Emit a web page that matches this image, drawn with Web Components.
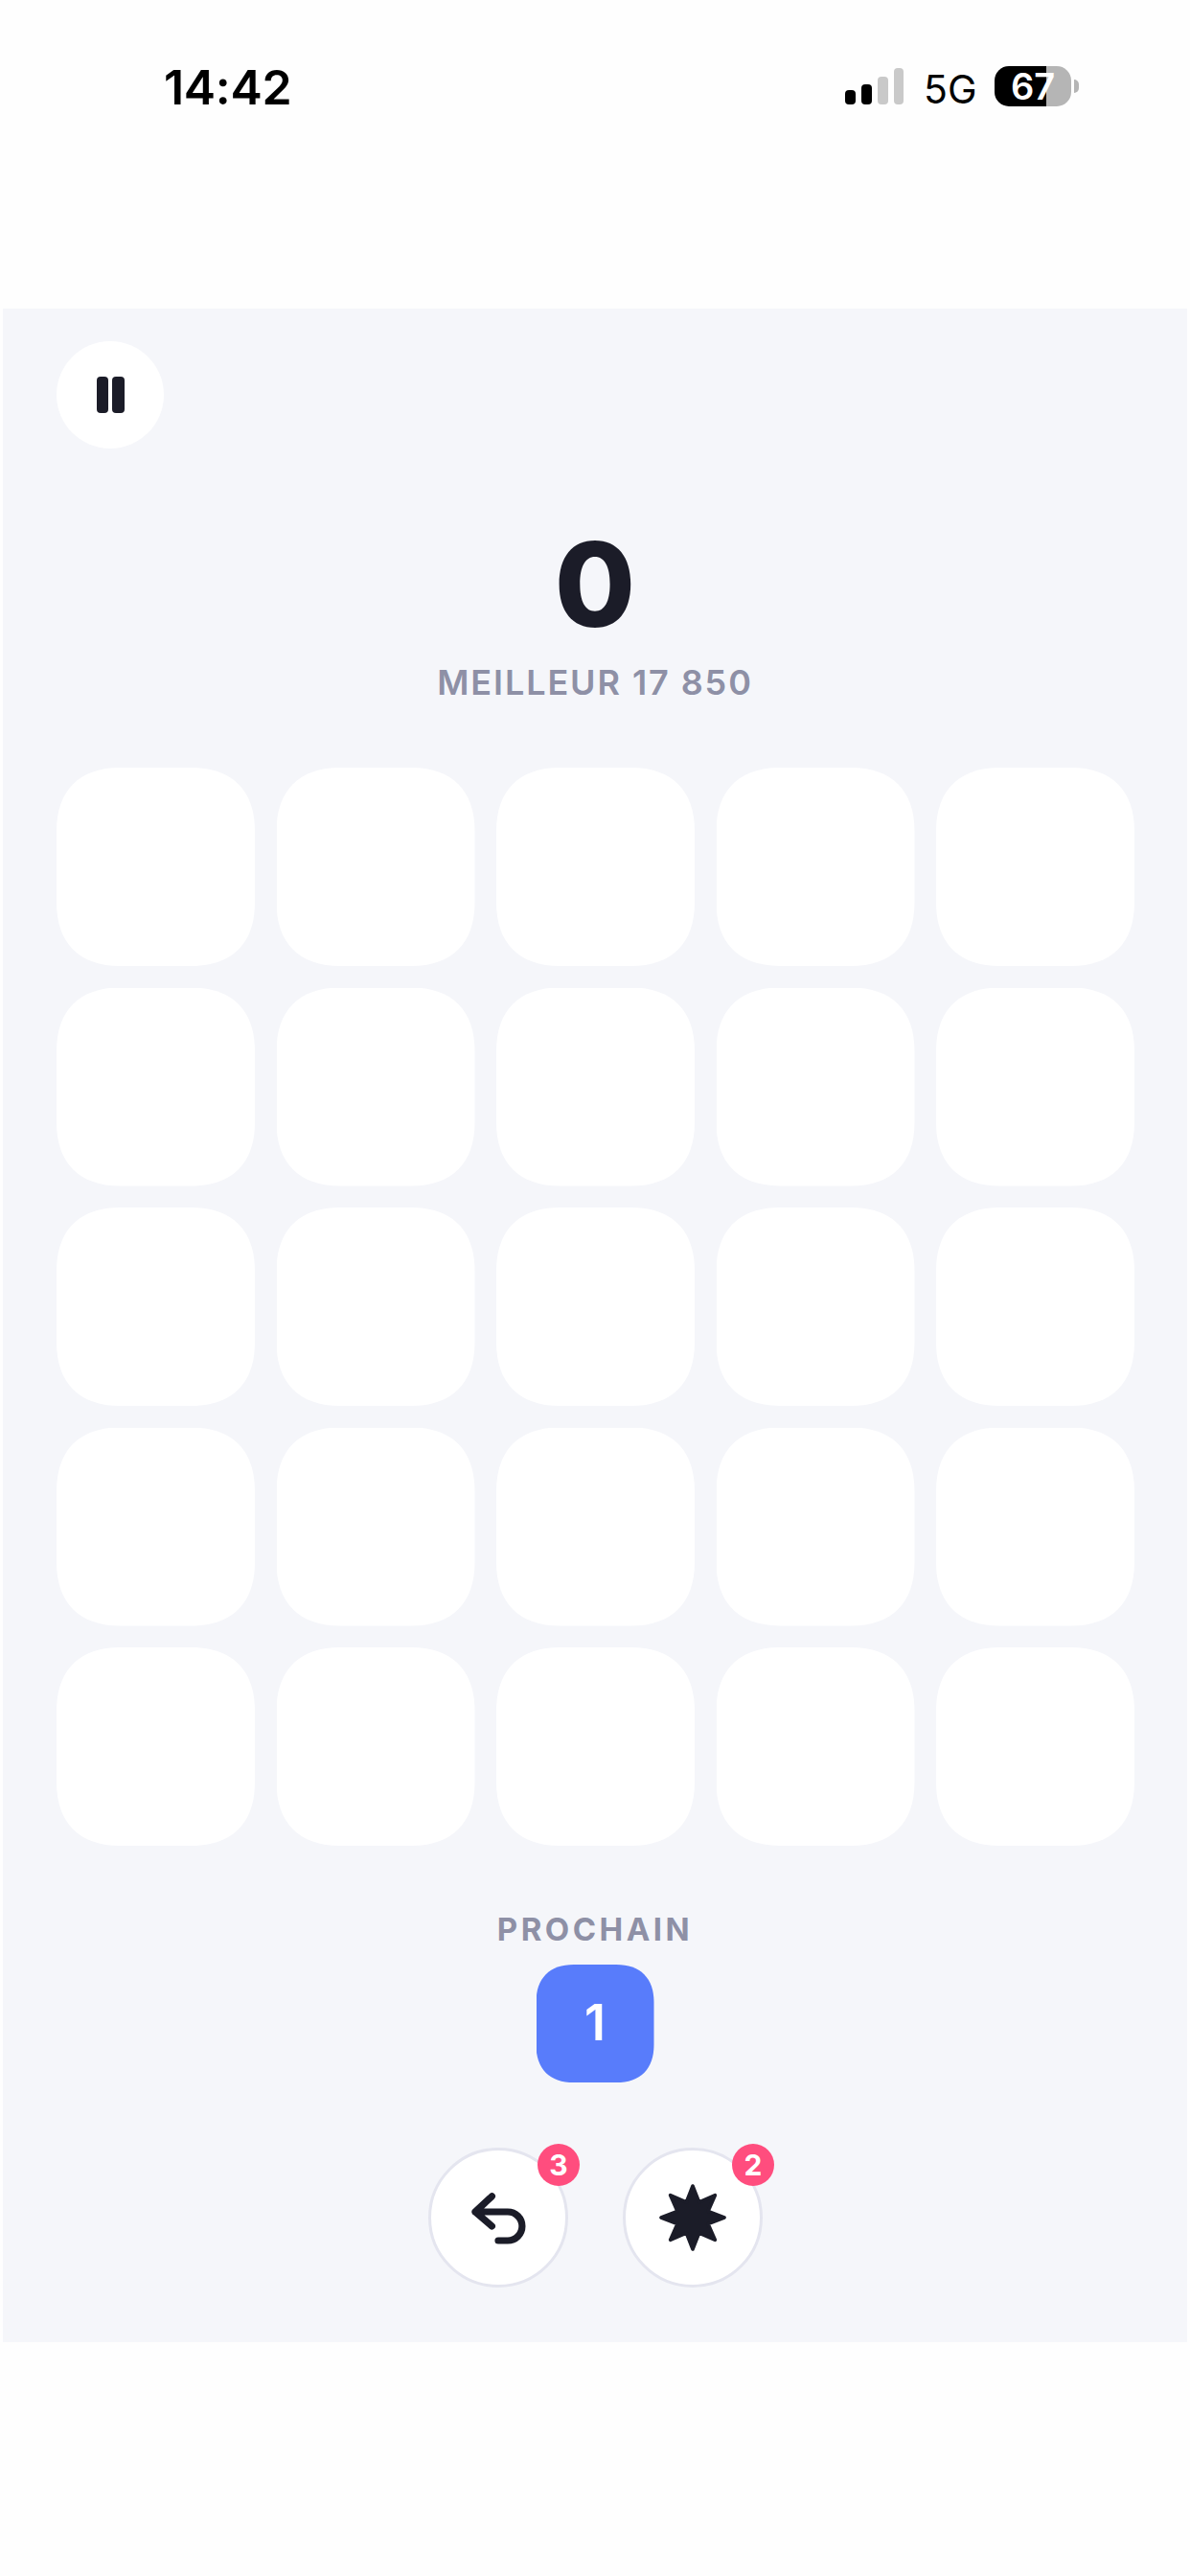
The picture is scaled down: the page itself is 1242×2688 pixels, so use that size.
<!DOCTYPE html>
<html lang="fr">
<head>
<meta charset="utf-8">
<title>Jeu</title>
<style>
html,body{margin:0;padding:0;background:#fefefe;font-family:Inter,"Noto Sans",sans-serif;}
</style>
</head>
<body>
<game-app></game-app>
<script>
function squircle(s,c,k){
  const a=s*c, b=s-a, h=s*k;
  return `M${a} 0H${b}C${s-h} 0 ${s} ${h} ${s} ${a}V${b}C${s} ${s-h} ${s-h} ${s} ${b} ${s}H${a}C${h} ${s} 0 ${s-h} 0 ${b}V${a}C0 ${h} ${h} 0 ${a} 0Z`;
}

class StatusBar extends HTMLElement{
  constructor(){super();this.attachShadow({mode:'open'}).innerHTML=`
  <style>
  :host{display:flex;justify-content:space-between;align-items:flex-start;height:322px;box-sizing:border-box;padding:0 116px 0 171px;background:#fefefe;color:#000;}
  .time{font:600 50px/50px Inter,sans-serif;margin-top:66px;letter-spacing:-.3px;}
  .right{display:flex;align-items:flex-start;margin-top:69px;}
  .sig{display:flex;align-items:flex-end;gap:6px;height:40px;margin-top:0;}
  .sig i{display:block;width:11px;border-radius:4px;background:#000;}
  .sig i.off{background:#c9c9c9;width:10.5px;}
  .net{font:400 41px/42px Inter,sans-serif;margin:3px 0 0 21px;width:74px;}
  .bat{display:flex;align-items:center;justify-content:center;width:80px;height:42px;border-radius:15px;background:linear-gradient(90deg,#000 0 54px,#b5b5b5 54px);color:#fff;font:600 38px/42px Inter,sans-serif;}
  .nub{width:5px;height:14px;margin:14px 0 0 3px;background:#b5b5b5;border-radius:0 7px 7px 0;}
  </style>
  <div class="time">14:42</div>
  <div class="right">
    <div class="sig"><i style="height:15px"></i><i style="height:21px"></i><i class="off" style="height:29px"></i><i class="off" style="height:38px"></i></div>
    <div class="net">5G</div>
    <div class="bat">67</div>
    <div class="nub"></div>
  </div>`;}
}
customElements.define('status-bar',StatusBar);

class PauseButton extends HTMLElement{
  constructor(){super();this.attachShadow({mode:'open'}).innerHTML=`
  <style>
  :host{display:flex;align-items:center;justify-content:center;gap:4px;width:112px;height:112px;border-radius:50%;background:#fff;}
  i{display:block;width:12.5px;height:38px;border-radius:4px;background:#1b1c28;}
  </style><i></i><i></i>`;}
}
customElements.define('pause-button',PauseButton);

class ScoreBoard extends HTMLElement{
  constructor(){super();this.attachShadow({mode:'open'}).innerHTML=`
  <style>
  :host{display:flex;flex-direction:column;align-items:center;}
  .score{font:800 122px/120px Inter,sans-serif;color:#1b1c28;}
  .best{font:600 36px/44px Inter,sans-serif;letter-spacing:.053em;color:#8e90a6;margin-top:20px;}
  </style>
  <div class="score"><slot name="score"></slot></div>
  <div class="best"><slot name="best"></slot></div>`;}
}
customElements.define('score-board',ScoreBoard);

class GameTile extends HTMLElement{
  connectedCallback(){
    if(this.shadowRoot)return;
    const s=+(this.getAttribute('size')||207), col=this.getAttribute('color')||'#fff';
    this.attachShadow({mode:'open'}).innerHTML=`
    <style>
    :host{display:flex;align-items:center;justify-content:center;box-sizing:border-box;width:${s}px;height:${s}px;background:${col};color:#fff;font:600 52px/1 Inter,sans-serif;clip-path:path('${squircle(s,.32,.115)}');}
    </style><slot></slot>`;
  }
}
customElements.define('game-tile',GameTile);

class GameGrid extends HTMLElement{
  constructor(){super();this.attachShadow({mode:'open'}).innerHTML=`<style>:host{display:grid;grid-template-columns:repeat(5,207px);gap:22.5px;}</style><slot></slot>`;}
  connectedCallback(){
    if(this.children.length)return;
    for(let i=0;i<25;i++)this.appendChild(document.createElement('game-tile'));
  }
}
customElements.define('game-grid',GameGrid);

class ToolButton extends HTMLElement{
  constructor(){super();this.attachShadow({mode:'open'}).innerHTML=`
  <style>
  :host{display:flex;position:relative;align-items:center;justify-content:center;width:146px;height:146px;box-sizing:border-box;border-radius:50%;background:#fff;border:3.5px solid #e4e5ef;}
  .b{position:absolute;top:-7.5px;right:-15.5px;width:44px;height:44px;border-radius:50%;background:#ff4d7e;color:#fff;display:flex;align-items:center;justify-content:center;font:700 30px/1 Inter,sans-serif;}
  </style>
  <slot></slot><span class="b"><slot name="badge"></slot></span>`;}
}
customElements.define('tool-button',ToolButton);

class GameApp extends HTMLElement{
  constructor(){super();
    let pts=[];
    for(let i=0;i<16;i++){const a=i*Math.PI/8-Math.PI/2,R=i%2?5.8:11;pts.push((12+R*Math.cos(a)).toFixed(2)+','+(12+R*Math.sin(a)).toFixed(2));}
    this.attachShadow({mode:'open'}).innerHTML=`
    <style>
    :host{display:block;width:1242px;}
    .panel{margin:0 3px;height:2122px;box-sizing:border-box;background:#f5f6fa;padding:34px 56px 0;display:flex;flex-direction:column;}
    pause-button{align-self:flex-start;}
    score-board{margin-top:82px;}
    game-grid{margin-top:67px;}
    .lbl{align-self:center;font:700 33px/40px Inter,sans-serif;letter-spacing:.105em;color:#8e90a6;margin-top:67px;}
    game-tile.next{align-self:center;margin-top:17px;padding-bottom:2px;}
    .tools{display:flex;justify-content:center;gap:57px;margin-top:68px;}
    svg{display:block;width:72px;height:72px;overflow:visible;}
    </style>
    <status-bar></status-bar>
    <main class="panel">
      <pause-button></pause-button>
      <score-board><span slot="score">0</span><span slot="best">MEILLEUR 17 850</span></score-board>
      <game-grid></game-grid>
      <div class="lbl">PROCHAIN</div>
      <game-tile class="next" size="123" color="#587cfb">1</game-tile>
      <div class="tools">
        <tool-button>
          <svg viewBox="0 0 24 24" fill="none" stroke="#1b1c28" stroke-width="2.4" stroke-linecap="round" stroke-linejoin="round"><path d="M9.8 4.6L4 10l5.8 5M4 10h11.3a5 5 0 0 1 0 10H12"/></svg>
          <span slot="badge">3</span>
        </tool-button>
        <tool-button>
          <svg viewBox="0 0 24 24" fill="#1b1c28" stroke="#1b1c28" stroke-width="1.2" stroke-linejoin="round"><polygon points="${pts.join(' ')}"/></svg>
          <span slot="badge">2</span>
        </tool-button>
      </div>
    </main>`;
  }
}
customElements.define('game-app',GameApp);
</script>
</body>
</html>
